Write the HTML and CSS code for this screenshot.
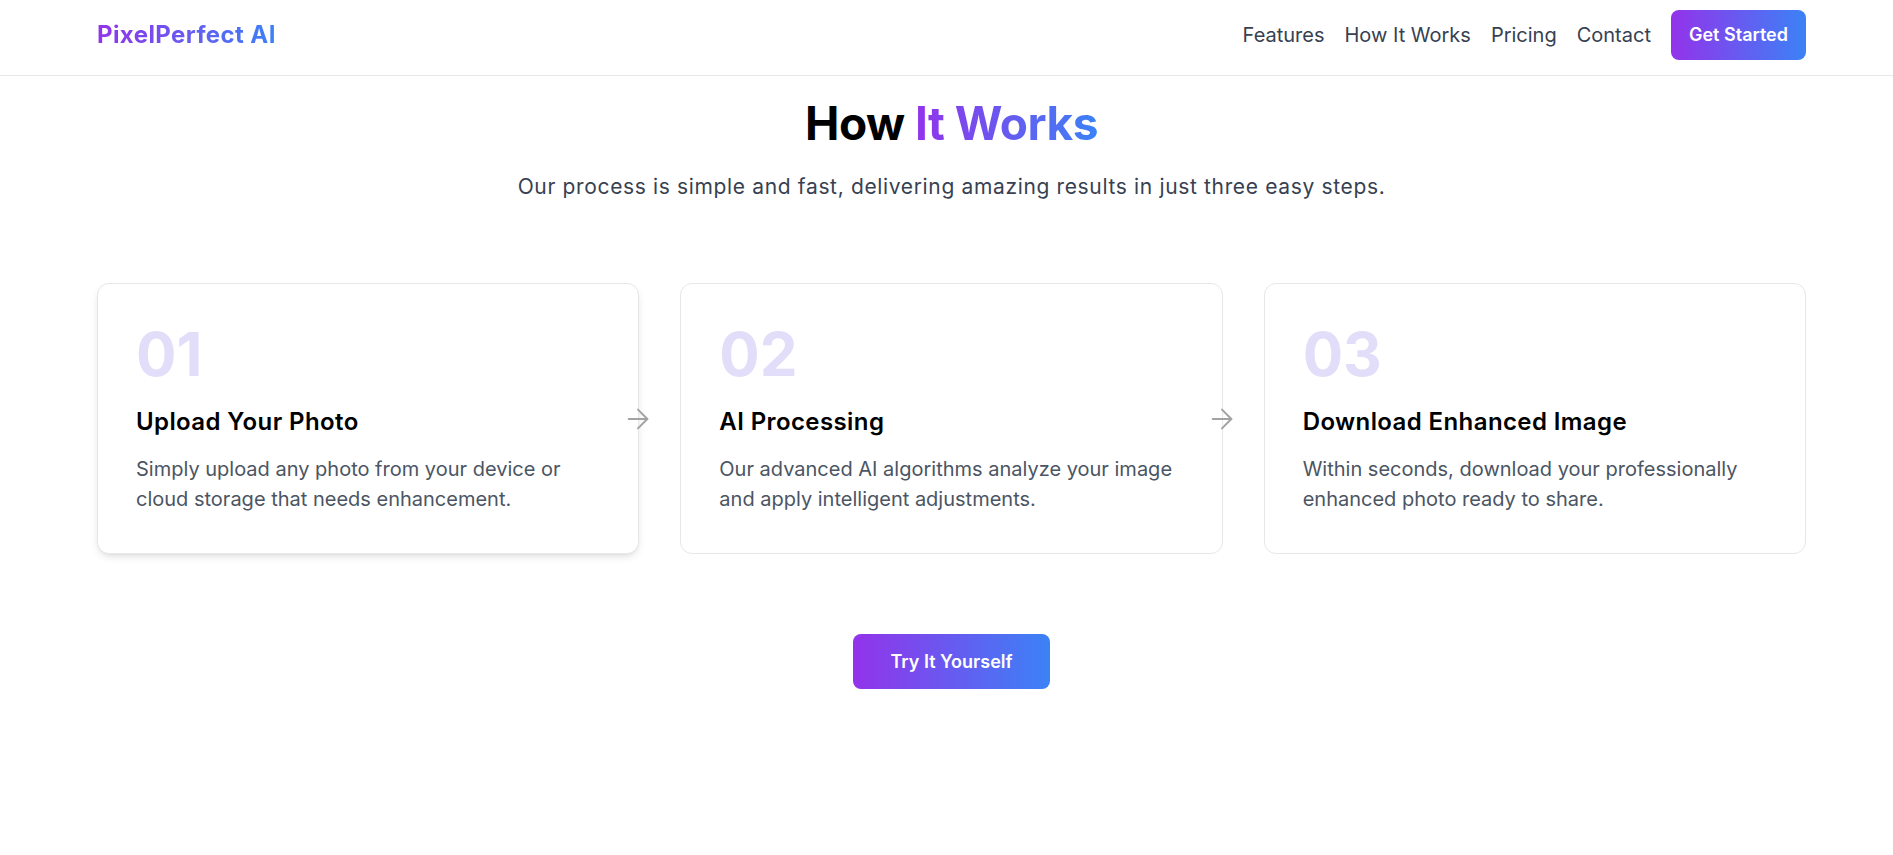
FILE: index.html
```html
<!DOCTYPE html>
<html lang="en">
<head>
<meta charset="utf-8">
<title>PixelPerfect AI - How It Works</title>
<link rel="stylesheet" href="styles.css">
</head>
<body>
<header class="site-header">
  <div class="container header-inner">
    <a class="logo" href="#">PixelPerfect AI</a>
    <nav class="nav">
      <a href="#" class="nav-link">Features</a>
      <a href="#" class="nav-link">How It Works</a>
      <a href="#" class="nav-link">Pricing</a>
      <a href="#" class="nav-link">Contact</a>
      <a href="#" class="btn btn-small">Get Started</a>
    </nav>
  </div>
</header>
<main>
  <section class="container how">
    <h1 class="how-title">How <span class="grad-text">It Works</span></h1>
    <p class="how-sub">Our process is simple and fast, delivering amazing results in just three easy steps.</p>
    <div class="steps">
      <div class="step step-active">
        <div class="step-num">01</div>
        <h3 class="step-title">Upload Your Photo</h3>
        <p class="step-desc">Simply upload any photo from your device or cloud storage that needs enhancement.</p>
        <svg class="step-arrow" viewBox="0 0 24 24" fill="none" stroke="currentColor" stroke-width="1.5" stroke-linecap="round" stroke-linejoin="round"><path d="M5 12h14"/><path d="m12 5 7 7-7 7"/></svg>
      </div>
      <div class="step">
        <div class="step-num">02</div>
        <h3 class="step-title">AI Processing</h3>
        <p class="step-desc">Our advanced AI algorithms analyze your image and apply intelligent adjustments.</p>
        <svg class="step-arrow" viewBox="0 0 24 24" fill="none" stroke="currentColor" stroke-width="1.5" stroke-linecap="round" stroke-linejoin="round"><path d="M5 12h14"/><path d="m12 5 7 7-7 7"/></svg>
      </div>
      <div class="step">
        <div class="step-num">03</div>
        <h3 class="step-title">Download Enhanced Image</h3>
        <p class="step-desc">Within seconds, download your professionally enhanced photo ready to share.</p>
      </div>
    </div>
    <div class="cta">
      <a href="#" class="btn btn-large">Try It Yourself</a>
    </div>
  </section>
</main>
</body>
</html>
```
FILE: styles.css
```css
* { box-sizing: border-box; }
html, body { margin: 0; padding: 0; background: #ffffff; }
body {
  font-family: Inter, "Noto Sans", "Liberation Sans", sans-serif;
  color: #111827;
}
a { text-decoration: none; }

.container {
  margin: 0 87px 0 97px;
}

.site-header {
  border-bottom: 1px solid #e5e7eb;
}
.header-inner {
  display: flex;
  align-items: center;
  justify-content: space-between;
  padding: 10px 0 15px;
}
.logo {
  font-size: 24px;
  line-height: 32px;
  font-weight: 700;
  letter-spacing: 0.4px;
  background: linear-gradient(90deg, #9333ea, #3b82f6);
  -webkit-background-clip: text;
  background-clip: text;
  color: transparent;
}
.nav {
  display: flex;
  align-items: center;
  gap: 20px;
}
.nav-link {
  font-size: 20px;
  line-height: 28px;
  color: #374151;
}

.btn {
  display: inline-block;
  color: #ffffff;
  font-weight: 600;
  background: linear-gradient(90deg, #9333ea, #3b82f6);
  border-radius: 8px;
}
.btn-small {
  font-size: 18px;
  line-height: 28px;
  padding: 11px 18px;
}
.btn-large {
  font-size: 18px;
  line-height: 28px;
  padding: 13.5px 38px;
}

.how {
  text-align: center;
  padding-top: 24px;
}
.how-title {
  margin: 0;
  font-size: 46px;
  line-height: 46px;
  font-weight: 700;
  letter-spacing: -0.5px;
  color: #000000;
}
.grad-text {
  background: linear-gradient(90deg, #9333ea, #3b82f6);
  -webkit-background-clip: text;
  background-clip: text;
  color: transparent;
}
.how-sub {
  margin: 27px 0 0;
  font-size: 21px;
  line-height: 28px;
  letter-spacing: 0.65px;
  color: #374151;
}

.steps {
  display: grid;
  grid-template-columns: repeat(3, 1fr);
  gap: 41px;
  margin-top: 82px;
  text-align: left;
}
.step {
  position: relative;
  border: 1px solid #e5e7eb;
  border-radius: 12px;
  padding: 40px 38px 39px;
  background: #ffffff;
}
.step-active {
  box-shadow: 0 4px 10px -2px rgba(0, 0, 0, 0.12), 0 2px 4px -2px rgba(0, 0, 0, 0.08);
}
.step-num {
  font-size: 60px;
  line-height: 60px;
  font-weight: 700;
  color: #e2defa;
}
.step-title {
  margin: 22px 0 0;
  font-size: 24px;
  line-height: 32px;
  font-weight: 600;
  letter-spacing: 0.4px;
  color: #000000;
}
.step-desc {
  margin: 16px 0 0;
  font-size: 20px;
  line-height: 30px;
  color: #4b5563;
}
.step-arrow {
  position: absolute;
  right: -16px;
  top: 50%;
  width: 32px;
  height: 32px;
  margin-top: -16px;
  color: #a3a3a3;
  z-index: 2;
}

.cta {
  margin-top: 80px;
  text-align: center;
}
```
